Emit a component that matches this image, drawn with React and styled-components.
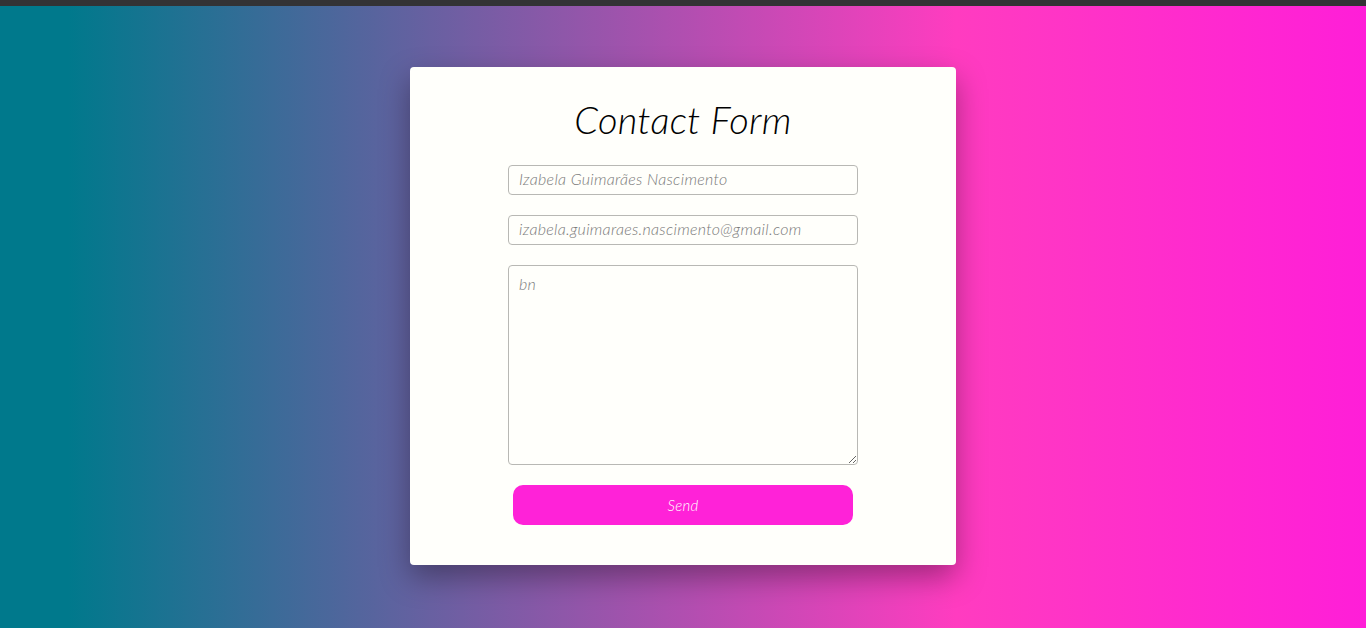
import React from 'react';
import styled, { createGlobalStyle } from 'styled-components';

const GlobalStyle = createGlobalStyle`
  html, body {
    margin: 0;
    padding: 0;
    height: 100%;
  }
  body {
    font-family: 'Lato', 'Noto Sans', sans-serif;
    background: linear-gradient(to right, #00798c 5%, #ff3cc0 70%, #ff1ed8 100%);
    overflow: hidden;
  }
`;

const TopBar = styled.div`
  height: 6px;
  background: #333335;
`;

const Page = styled.main`
  height: 622px;
  display: flex;
  justify-content: center;
  align-items: flex-start;
  padding-top: 61px;
  box-sizing: border-box;
`;

const Card = styled.form`
  width: 546px;
  height: 498px;
  box-sizing: border-box;
  background: #fffffb;
  border-radius: 4px;
  box-shadow: 0 12px 30px rgba(0, 0, 0, 0.35);
  display: flex;
  flex-direction: column;
  align-items: center;
  padding: 30px 0 40px;
`;

const Title = styled.h1`
  margin: 0 0 24px;
  font-size: 38px;
  line-height: 44px;
  letter-spacing: 0.3px;
  font-weight: 300;
  font-style: italic;
  color: #000;
`;

const fieldStyles = `
  flex-shrink: 0;
  width: 350px;
  box-sizing: border-box;
  border: 1px solid #b8b8b4;
  border-radius: 4px;
  background: #fffffb;
  padding: 0 10px 3px;
  font-family: 'Lato', 'Noto Sans', sans-serif;
  font-size: 16px;
  letter-spacing: 0.3px;
  font-weight: 300;
  font-style: italic;
  color: #333;
  outline: none;
  &::placeholder {
    color: #7a7a7a;
  }
`;

const Input = styled.input`
  ${fieldStyles}
  height: 30px;
  margin-bottom: 20px;
`;

const Message = styled.textarea`
  ${fieldStyles}
  display: block;
  height: 200px;
  padding-top: 8px;
  margin: 0 0 20px;
  resize: vertical;
`;

const SendButton = styled.button`
  flex-shrink: 0;
  width: 340px;
  height: 40px;
  border: none;
  border-radius: 10px;
  background: #ff22d8;
  color: #fff;
  font-family: 'Lato', 'Noto Sans', sans-serif;
  font-size: 15px;
  letter-spacing: 0.3px;
  font-weight: 300;
  font-style: italic;
  cursor: pointer;
`;

const App = () => (
  <>
    <GlobalStyle />
    <TopBar />
    <Page>
      <Card onSubmit={(e) => e.preventDefault()}>
        <Title>Contact Form</Title>
        <Input type="text" placeholder="Izabela Guimarães Nascimento" />
        <Input type="email" placeholder="izabela.guimaraes.nascimento@gmail.com" />
        <Message placeholder="bn" />
        <SendButton type="submit">Send</SendButton>
      </Card>
    </Page>
  </>
);

export default App;
